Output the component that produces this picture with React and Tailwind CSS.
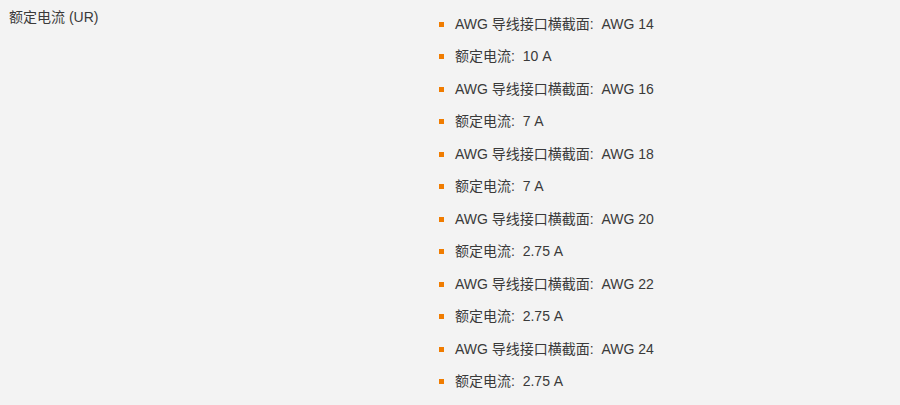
const rows = [
  ['AWG 导线接口横截面', 'AWG 14'],
  ['额定电流', '10 A'],
  ['AWG 导线接口横截面', 'AWG 16'],
  ['额定电流', '7 A'],
  ['AWG 导线接口横截面', 'AWG 18'],
  ['额定电流', '7 A'],
  ['AWG 导线接口横截面', 'AWG 20'],
  ['额定电流', '2.75 A'],
  ['AWG 导线接口横截面', 'AWG 22'],
  ['额定电流', '2.75 A'],
  ['AWG 导线接口横截面', 'AWG 24'],
  ['额定电流', '2.75 A'],
];

export default function App() {
  return (
    <div
      className="w-[900px] h-[405px] bg-[#f3f3f3] text-[#3a3a3a] grid grid-cols-[439px_1fr] overflow-hidden"
      style={{ fontFamily: '"Liberation Sans", Arial, "Noto Sans CJK SC", sans-serif' }}
    >
      <div className="pl-[9px] pt-[7px] text-[14px] leading-[20px]">额定电流 (UR)</div>
      <ul className="pt-[8px]">
        {rows.map(([k, v], i) => (
          <li key={i} className="flex items-center h-[32.5px] text-[14px]">
            <span className="w-[5px] h-[5px] bg-[#f07c00] mr-[11px] shrink-0" />
            <span>
              {k}:&nbsp;&nbsp;{v}
            </span>
          </li>
        ))}
      </ul>
    </div>
  );
}
